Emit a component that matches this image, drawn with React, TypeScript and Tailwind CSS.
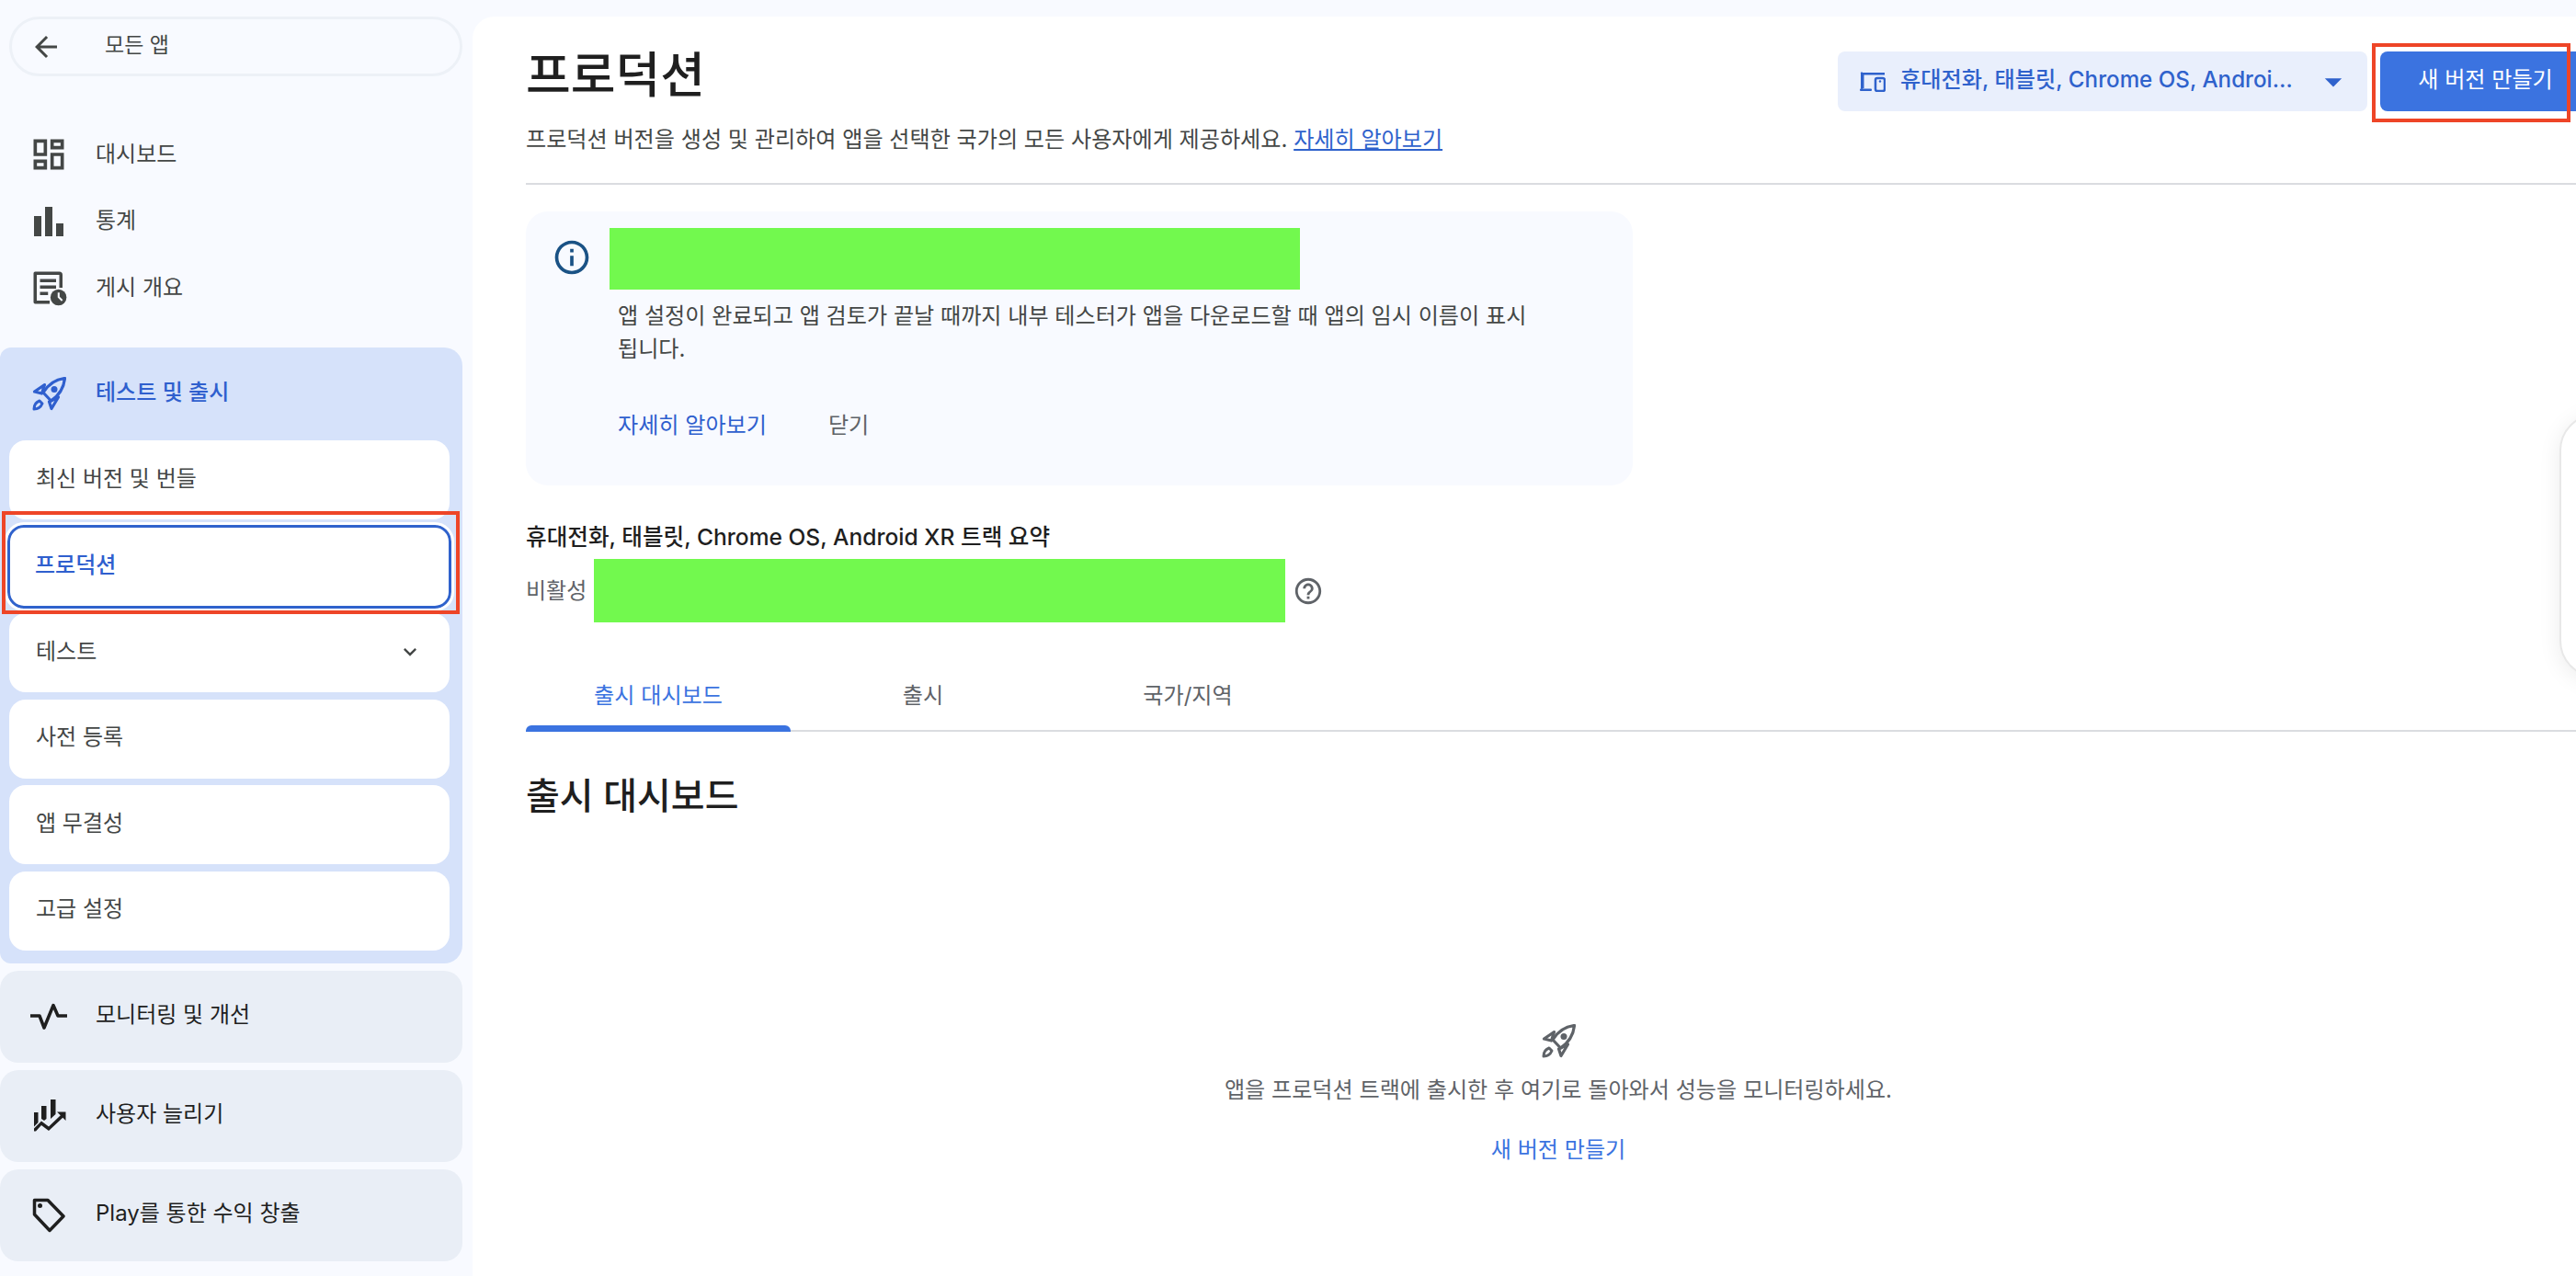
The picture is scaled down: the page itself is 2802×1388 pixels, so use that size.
import {
  MdArrowBack,
  MdArrowDropDown,
  MdBarChart,
  MdExpandMore,
  MdHelpOutline,
  MdOutlineDashboard,
  MdOutlineInfo,
} from "react-icons/md";

const font = "font-['Inter','Noto_Sans_CJK_KR',sans-serif]";

function RocketIcon({ className }: { className?: string }) {
  return (
    <svg viewBox="0 0 37 37" className={className} fill="none" stroke="currentColor" strokeWidth="3.2" strokeLinejoin="round">
      <path d="M35.500 1.500C26 2.500 18 7.500 12 17l8.500 9C29.500 20 34.500 12 35.500 1.500z" />
      <path d="M13.500 8.500 2.500 16l8 2z" />
      <path d="M28.500 22 21 34.500 18.500 27z" />
      <path d="M8 26c-4 1.500-6 5.500-6 9 4 0 7.500-2.500 9-6z" strokeWidth="3" />
      <circle cx="24" cy="13.500" r="3.500" fill="currentColor" stroke="none" />
    </svg>
  );
}

function PublishIcon({ className }: { className?: string }) {
  return (
    <svg viewBox="0 0 24 24" className={className} fill="currentColor">
      <path d="M3 2h15a2 2 0 0 1 2 2v8h-2V4H4v16h8v2H3a1 1 0 0 1-1-1V3a1 1 0 0 1 1-1z" />
      <path d="M6 6.500h10v2H6zM6 10.500h10v2H6zM6 14.500h5v2H6z" />
      <circle cx="17.500" cy="18" r="5" />
      <path d="M17 15h1.200v2.600l2 2-.8.8-2.400-2.400z" fill="#f8faff" />
    </svg>
  );
}

function PulseIcon({ className }: { className?: string }) {
  return (
    <svg viewBox="0 0 40 30" className={className} fill="none" stroke="currentColor" strokeWidth="3.500" strokeLinejoin="round">
      <path d="M0 14h10l5 13L25 2.500 30 14h10" />
    </svg>
  );
}

function GrowthIcon({ className }: { className?: string }) {
  return (
    <svg viewBox="0 0 35 35" className={className} fill="currentColor">
      <path d="M0 14h4.500v11L0 29.500zM8 7h5.500v14L11 23l-3-2zM18 0h5.500v16L18 21z" />
      <path d="M25 13.500h9.500V23l-3.200-3.200L16 34l-8-6-6 6.500H0v-3l8-8 8 6 12.800-12.200z" />
    </svg>
  );
}

function TagIcon({ className }: { className?: string }) {
  return (
    <svg viewBox="0 0 36 38" className={className} fill="none" stroke="currentColor" strokeWidth="3.500" strokeLinejoin="round">
      <path d="M2.500 2.500H17L34 20 19 35.500 2.500 18z" />
      <circle cx="8.500" cy="8.500" r="2.500" fill="currentColor" stroke="none" />
    </svg>
  );
}

function DevicesIcon({ className }: { className?: string }) {
  return (
    <svg viewBox="0 0 28 22" className={className} fill="currentColor">
      <path d="M3 1h24v2.500H4.500V18H3.500A.5.500 0 0 1 1 17.500V2a1 1 0 0 1 2-1z" />
      <rect x="0" y="18.500" width="13" height="2.500" rx="1" />
      <rect x="17" y="7" width="10" height="14" rx="2" fill="none" stroke="currentColor" strokeWidth="2.500" />
      <circle cx="22" cy="10.500" r="1.200" />
    </svg>
  );
}

const subItems = ["최신 버전 및 번들", "프로덕션", "테스트", "사전 등록", "앱 무결성", "고급 설정"];

function Sidebar() {
  return (
    <aside className="w-[514px] shrink-0 pt-[18px] pr-[11px]">
      <div className="ml-[10px] flex h-[65px] items-center rounded-full border-[3px] border-[#edf1f7] pl-[19px] text-[#444746]">
        <MdArrowBack className="size-[36px]" />
        <span className="mb-[3px] ml-[46px] text-[23px]">모든 앱</span>
      </div>

      <nav className="mt-[49px] flex flex-col text-[#444746]">
        <div className="flex h-[72px] items-center pl-[33px]">
          <span className="flex w-[40px] justify-center">
            <MdOutlineDashboard className="size-[44px] shrink-0" />
          </span>
          <span className="mb-[1px] ml-[31px] text-[24px]">대시보드</span>
        </div>
        <div className="flex h-[73px] items-center pl-[33px]">
          <span className="flex w-[40px] justify-center">
            <MdBarChart className="size-[48px] shrink-0" />
          </span>
          <span className="mb-[1px] ml-[31px] text-[24px]">통계</span>
        </div>
        <div className="flex h-[72px] items-center pl-[33px]">
          <PublishIcon className="size-[42px]" />
          <span className="mb-[1px] ml-[29px] text-[24px]">게시 개요</span>
        </div>
      </nav>

      <section className="mt-[29px] rounded-[20px] rounded-l-[12px] bg-[#d6e2fa] pb-[14px]">
        <div className="flex h-[101px] items-center pl-[35px] text-[#2f5fce]">
          <RocketIcon className="size-[37px]" />
          <span className="mb-[3px] ml-[32px] text-[24px] font-medium">테스트 및 출시</span>
        </div>
        <ul className="flex flex-col gap-[7.500px] pr-[14px] pl-[10px]">
          {subItems.map((item) =>
            item === "프로덕션" ? (
              <li
                key={item}
                className="-mx-[2px] -my-[2px] flex h-[91px] items-center rounded-[18px] border-[3px] border-[#2f62cc] bg-white pb-[3px] pl-[27px] text-[24px] font-medium text-[#2f5fce] outline-[3px] outline-white"
              >
                {item}
              </li>
            ) : (
              <li key={item} className="flex h-[86px] items-center justify-between rounded-[18px] bg-white pb-[3px] pl-[29px] pr-[29px] text-[24px] text-[#444746]">
                {item}
                {item === "테스트" && <MdExpandMore className="size-[28px]" />}
              </li>
            ),
          )}
        </ul>
      </section>

      <div className="mt-[8px] flex flex-col gap-[8px] text-[#1f1f1f]">
        <div className="flex h-[100px] items-center rounded-[20px] bg-[#e9eef6] pl-[33px]">
          <PulseIcon className="h-[30px] w-[40px]" />
          <span className="mb-[3px] ml-[31px] text-[24px]">모니터링 및 개선</span>
        </div>
        <div className="flex h-[100px] items-center rounded-[20px] bg-[#e9eef6] pl-[37px]">
          <GrowthIcon className="size-[35px]" />
          <span className="mb-[3px] ml-[32px] text-[24px]">사용자 늘리기</span>
        </div>
        <div className="flex h-[100px] items-center rounded-[20px] bg-[#e9eef6] pl-[35px]">
          <TagIcon className="h-[38px] w-[36px]" />
          <span className="mb-[3px] ml-[33px] text-[24px]">Play를 통한 수익 창출</span>
        </div>
      </div>
    </aside>
  );
}

function Header() {
  return (
    <header className="flex h-[183px] items-start justify-between border-b-2 border-[#dadce0]">
      <div className="pt-[29px]">
        <h1 className="text-[53px] leading-[70px] font-medium text-[#1f1f1f]">프로덕션</h1>
        <p className="mt-[17px] text-[24.100px] leading-[36px] text-[#444746]">
          프로덕션 버전을 생성 및 관리하여 앱을 선택한 국가의 모든 사용자에게 제공하세요.{" "}
          <a className="text-[#2f62cc] underline">자세히 알아보기</a>
        </p>
      </div>
      <div className="flex gap-[14px] pt-[38px]">
        <div className="flex h-[65px] w-[576px] items-center rounded-[8px] bg-[#e9effc] pl-[24px] text-[#2f62cc]">
          <DevicesIcon className="h-[22px] w-[28px]" />
          <span className="mb-[2px] ml-[16px] w-[438px] truncate text-[24.200px] font-medium">휴대전화, 태블릿, Chrome OS, Android XR</span>
          <MdArrowDropDown className="ml-[11px] size-[44px]" />
        </div>
        <button className="h-[65px] w-[229px] rounded-[8px] bg-[#3b73e0] pb-[2px] text-[24.100px] text-white">새 버전 만들기</button>
      </div>
    </header>
  );
}

function InfoCard() {
  return (
    <div className="mt-[29px] flex h-[298px] w-[1204px] rounded-[24px] bg-[#f8faff] pt-[18px] pl-[28px]">
      <MdOutlineInfo className="mt-[10px] size-[44px] shrink-0 text-[#1a5285]" />
      <div className="ml-[19px]">
        <div className="h-[67px] w-[751px] bg-[#72f94e]" />
        <p className="mt-[11px] ml-[9px] w-[1000px] text-[24.100px] leading-[36px] text-[#444746]">
          앱 설정이 완료되고 앱 검토가 끝날 때까지 내부 테스터가 앱을 다운로드할 때 앱의 임시 이름이 표시 됩니다.
        </p>
        <div className="mt-[47px] ml-[9px] flex gap-[67px] text-[24.100px] leading-[36px]">
          <a className="text-[#2f5fce]">자세히 알아보기</a>
          <a className="text-[#5f6368]">닫기</a>
        </div>
      </div>
    </div>
  );
}

function TrackSummary() {
  return (
    <div className="mt-[38px]">
      <h3 className="text-[24.600px] leading-[36px] font-medium text-[#1f1f1f]">휴대전화, 태블릿, Chrome OS, Android XR 트랙 요약</h3>
      <div className="mt-[6px] flex items-center">
        <span className="text-[24px] text-[#5f6368]">비활성</span>
        <div className="ml-[8px] h-[69px] w-[752px] bg-[#72f94e]" />
        <MdHelpOutline className="ml-[8px] size-[34px] text-[#5f6368]" />
      </div>
    </div>
  );
}

function Tabs() {
  return (
    <div className="mt-[37px] flex h-[82px] border-b-2 border-[#dadce0] pt-[6px] text-[24.100px]">
      <div className="relative flex w-[288px] items-center justify-center text-[#3b73e0]">
        출시 대시보드
        <span className="absolute inset-x-0 -bottom-[2px] h-[7px] rounded-t-[6px] bg-[#3b73e0]" />
      </div>
      <div className="flex w-[288px] items-center justify-center text-[#5f6368]">출시</div>
      <div className="flex w-[288px] items-center justify-center text-[#5f6368]">국가/지역</div>
    </div>
  );
}

function EmptyState() {
  return (
    <div className="flex flex-col items-center pt-[220px]">
      <RocketIcon className="size-[37px] text-[#5f6368]" />
      <p className="mt-[17px] text-[24.100px] leading-[36px] text-[#5f6368]">앱을 프로덕션 트랙에 출시한 후 여기로 돌아와서 성능을 모니터링하세요.</p>
      <a className="mt-[29px] text-[24.100px] leading-[36px] text-[#3b73e0]">새 버전 만들기</a>
    </div>
  );
}

export default function App() {
  return (
    <div className={`${font} relative flex h-[1388px] w-[2802px] overflow-hidden bg-[#f8faff]`}>
      <Sidebar />
      <main className="mt-[18px] flex-1 rounded-tl-[24px] bg-white pl-[58px]">
        <div className="w-[2246px]">
          <Header />
          <InfoCard />
          <TrackSummary />
          <Tabs />
          <h2 className="mt-[42px] text-[40px] leading-[56px] font-medium text-[#1f1f1f]">출시 대시보드</h2>
          <EmptyState />
        </div>
      </main>

      {/* red annotation boxes drawn over the page */}
      <div className="absolute top-[47px] left-[2580px] h-[86px] w-[216px] border-[4px] border-[#ee4527]" />
      <div className="absolute top-[556px] left-[2px] h-[112px] w-[498px] border-[4px] border-[#ee4527]" />

      {/* card peeking in from the right edge */}
      <div className="absolute top-[450px] left-[2784px] h-[287px] w-[200px] rounded-[40px] border-2 border-[#e8e8e8] bg-white shadow-[0_4px_24px_rgba(0,0,0,0.08)]" />
    </div>
  );
}
